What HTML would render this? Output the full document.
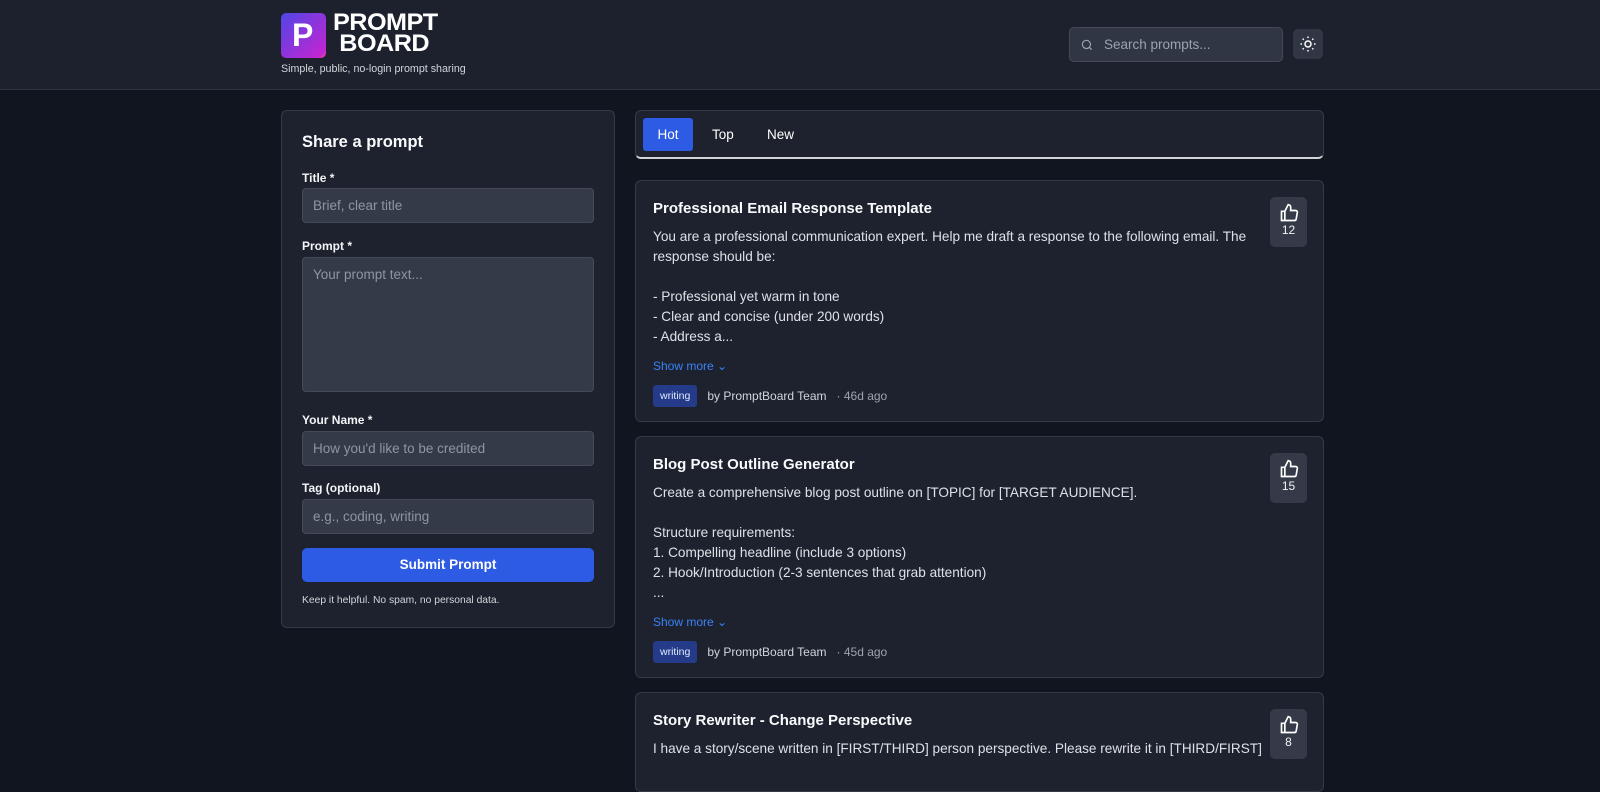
<!DOCTYPE html>
<html><head><meta charset="utf-8"><style>
*{box-sizing:border-box;margin:0;padding:0}
body{width:1600px;height:751px;overflow:hidden;background:#111520;font-family:"Liberation Sans",sans-serif;color:#e5e7eb;position:relative}
.hdr{position:absolute;left:0;top:0;width:1600px;height:90px;background:#1c212d;border-bottom:1px solid #2e3442}
.abs{position:absolute}
.card{position:absolute;background:#1d222e;border:1px solid #333a48;border-radius:6px}
.lbl{position:absolute;left:20px;font-size:12px;font-weight:bold;color:#f3f4f6}
.inp{position:absolute;left:20px;width:292px;height:35px;background:#343a48;border:1px solid #434a59;border-radius:4px;color:#8e95a3;font-size:13.5px;padding:9px 10px}
.pc h3{position:absolute;left:17px;top:19px;font-size:15px;font-weight:bold;color:#f9fafb}
.pc .txt{position:absolute;left:17px;top:46px;width:610px;font-size:13.6px;line-height:20px;color:#dde1e7;white-space:pre-line}
.sm{position:absolute;left:17px;font-size:12px;color:#3b82f6}
.meta{position:absolute;left:17px;font-size:12px;color:#d1d5db;display:flex;align-items:center}
.tag{background:#263a8a;color:#dbeafe;font-size:10.5px;padding:5px 7px;border-radius:3px;margin-right:10px}
.vote{position:absolute;right:16px;top:16px;width:37px;height:50px;background:#343a48;border-radius:5px;text-align:center;font-size:12px;color:#f3f4f6}
.vote svg{margin-top:6px;display:block;margin-left:auto;margin-right:auto}
</style></head><body>
<div class="hdr">
 <div class="abs" style="left:281px;top:13px;width:45px;height:45px;border-radius:5px;background:linear-gradient(135deg,#4f46e5,#c026d3 90%,#ec4899)"></div>
 <div class="abs" style="left:292px;top:17px;font-size:32px;font-weight:900;color:#fff">P</div>
 <div class="abs" style="left:333px;top:12px;font-size:24px;font-weight:900;color:#fff;line-height:21px;letter-spacing:-0.5px;transform:scaleX(1.05);transform-origin:left">PROMPT<br><span style="margin-left:6px">BOARD</span></div>
 <div class="abs" style="left:281px;top:63px;font-size:10.7px;color:#d1d5db">Simple, public, no-login prompt sharing</div>
 <div class="abs" style="left:1069px;top:27px;width:214px;height:35px;background:#303644;border:1px solid #434a59;border-radius:5px">
  <svg class="abs" style="left:10px;top:10px" width="14" height="14" viewBox="0 0 24 24" fill="none" stroke="#9ca3af" stroke-width="2"><circle cx="11" cy="11" r="7"/><path d="M20 20l-4-4"/></svg>
  <div class="abs" style="left:34px;top:9px;font-size:13.5px;color:#9ca3af">Search prompts...</div>
 </div>
 <div class="abs" style="left:1293px;top:29px;width:30px;height:30px;background:#303644;border-radius:5px">
  <svg class="abs" style="left:6px;top:6px" width="18" height="18" viewBox="0 0 24 24" fill="none" stroke="#fff" stroke-width="2"><circle cx="12" cy="12" r="4"/><path d="M12 2v2M12 20v2M2 12h2M20 12h2M4.9 4.9l1.4 1.4M17.7 17.7l1.4 1.4M4.9 19.1l1.4-1.4M17.7 6.3l1.4-1.4"/></svg>
 </div>
</div>

<div class="card" style="left:281px;top:110px;width:334px;height:518px">
 <div class="abs" style="left:20px;top:22px;font-size:16.5px;font-weight:bold;color:#f9fafb">Share a prompt</div>
 <div class="lbl" style="top:60px">Title *</div>
 <div class="inp" style="top:77px">Brief, clear title</div>
 <div class="lbl" style="top:128px">Prompt *</div>
 <div class="inp" style="top:146px;height:135px">Your prompt text...</div>
 <div class="lbl" style="top:302px">Your Name *</div>
 <div class="inp" style="top:320px">How you'd like to be credited</div>
 <div class="lbl" style="top:370px">Tag (optional)</div>
 <div class="inp" style="top:388px">e.g., coding, writing</div>
 <div class="abs" style="left:20px;top:437px;width:292px;height:34px;background:#2d5be3;border-radius:5px;color:#fff;font-size:13.5px;font-weight:bold;text-align:center;line-height:34px">Submit Prompt</div>
 <div class="abs" style="left:20px;top:484px;font-size:10.3px;color:#d1d5db">Keep it helpful. No spam, no personal data.</div>
</div>

<div class="card" style="left:635px;top:110px;width:689px;height:49px;border-bottom:2px solid #d1d5db">
 <div class="abs" style="left:7px;top:7px;width:50px;height:33px;background:#2d5be3;border-radius:3px;color:#fff;font-size:13.5px;text-align:center;line-height:33px">Hot</div>
 <div class="abs" style="left:76px;top:16px;font-size:13.5px;color:#fff">Top</div>
 <div class="abs" style="left:131px;top:16px;font-size:13.5px;color:#fff">New</div>
</div>

<div class="card pc" style="left:635px;top:180px;width:689px;height:242px">
 <h3>Professional Email Response Template</h3>
 <div class="txt">You are a professional communication expert. Help me draft a response to the following email. The response should be:

- Professional yet warm in tone
- Clear and concise (under 200 words)
- Address a...</div>
 <div class="sm" style="top:178px">Show more ⌄</div>
 <div class="meta" style="top:204px"><span class="tag">writing</span>by PromptBoard Team <span style="color:#9ca3af;margin-left:10px">· 46d ago</span></div>
 <div class="vote"><svg width="20" height="20" viewBox="0 0 24 24" fill="none" stroke="#fff" stroke-width="2"><path d="M7 10v11H3V10zM7 10l4-8a3 3 0 0 1 3 3v4h6a2 2 0 0 1 2 2.3l-1.4 8A2 2 0 0 1 18.6 21H7"/></svg><div>12</div></div>
</div>

<div class="card pc" style="left:635px;top:436px;width:689px;height:242px">
 <h3>Blog Post Outline Generator</h3>
 <div class="txt">Create a comprehensive blog post outline on [TOPIC] for [TARGET AUDIENCE].

Structure requirements:
1. Compelling headline (include 3 options)
2. Hook/Introduction (2-3 sentences that grab attention)
...</div>
 <div class="sm" style="top:178px">Show more ⌄</div>
 <div class="meta" style="top:204px"><span class="tag">writing</span>by PromptBoard Team <span style="color:#9ca3af;margin-left:10px">· 45d ago</span></div>
 <div class="vote"><svg width="20" height="20" viewBox="0 0 24 24" fill="none" stroke="#fff" stroke-width="2"><path d="M7 10v11H3V10zM7 10l4-8a3 3 0 0 1 3 3v4h6a2 2 0 0 1 2 2.3l-1.4 8A2 2 0 0 1 18.6 21H7"/></svg><div>15</div></div>
</div>

<div class="card pc" style="left:635px;top:692px;width:689px;height:100px">
 <h3>Story Rewriter - Change Perspective</h3>
 <div class="txt">I have a story/scene written in [FIRST/THIRD] person perspective. Please rewrite it in [THIRD/FIRST]</div>
 <div class="vote"><svg width="20" height="20" viewBox="0 0 24 24" fill="none" stroke="#fff" stroke-width="2"><path d="M7 10v11H3V10zM7 10l4-8a3 3 0 0 1 3 3v4h6a2 2 0 0 1 2 2.3l-1.4 8A2 2 0 0 1 18.6 21H7"/></svg><div>8</div></div>
</div>
</body></html>
